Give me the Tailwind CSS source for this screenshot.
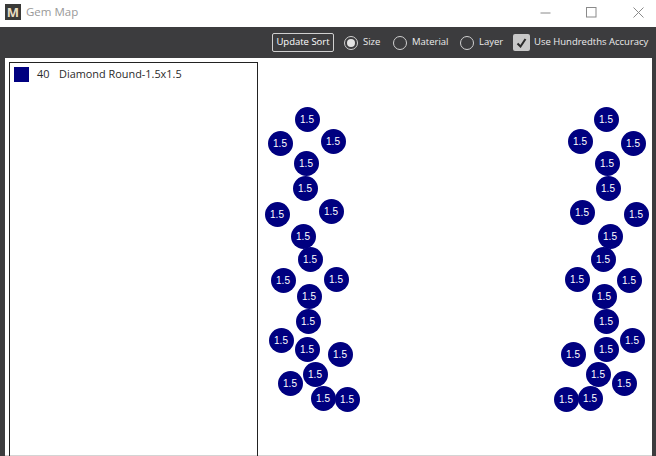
<!DOCTYPE html>
<html lang="en">
<head>
<meta charset="UTF-8">
<title>Gem Map</title>
<script src="https://cdn.jsdelivr.net/npm/@tailwindcss/browser@4"></script>
</head>
<body class="w-[656px] h-[456px] overflow-hidden bg-[#3c3c3e] font-['Open_Sans',sans-serif]">
  <!-- title bar -->
  <div class="h-[27px] bg-white flex items-center pl-[5px]">
    <div class="w-[16px] h-[16px] mb-[3px] bg-[#3a3a38] text-[#e6dcc0] text-[13px] leading-[16px] font-bold text-center">M</div>
    <span class="ml-[5px] mb-[3px] text-[11.5px] text-[#999]">Gem Map</span>
    <div class="ml-auto flex items-center mb-[3px]">
      <svg class="mr-[35px]" width="11" height="11" viewBox="0 0 11 11"><path d="M0.5 6h10" stroke="#8a8a8a" fill="none"/></svg>
      <svg class="mr-[36px]" width="11" height="11" viewBox="0 0 11 11"><rect x="0.5" y="0.5" width="9.5" height="9.5" stroke="#8a8a8a" fill="none"/></svg>
      <svg class="mr-[12px]" width="11" height="11" viewBox="0 0 11 11"><path d="M0.5 0.5l10 10M10.5 0.5l-10 10" stroke="#8a8a8a" fill="none"/></svg>
    </div>
  </div>
  <!-- toolbar -->
  <div class="h-[31px] flex items-center justify-end pr-[7px] text-[9.5px] text-[#ececec]">
    <button class="h-[19px] w-[62px] border border-[#d0d0d0] rounded-[2px] text-white text-[9.5px] mr-[10px]">Update Sort</button>
    <span class="w-[14px] h-[14px] rounded-full border border-[#d0d0d0] flex items-center justify-center mr-[5px]"><span class="w-[8px] h-[8px] rounded-full bg-[#e4e4e4]"></span></span>
    <span class="w-[18px] mr-[12px]">Size</span>
    <span class="w-[14px] h-[14px] rounded-full border border-[#d0d0d0] mr-[5px]"></span>
    <span class="w-[36px] mr-[12px]">Material</span>
    <span class="w-[14px] h-[14px] rounded-full border border-[#d0d0d0] mr-[5px]"></span>
    <span class="w-[25px] mr-[9px]">Layer</span>
    <span class="w-[17px] h-[17px] rounded-[2px] bg-[#c8c8c8] flex items-center justify-center mr-[4px]">
      <svg width="11" height="10" viewBox="0 0 11 10"><path d="M1.5 5.5l3 3 5-7.5" stroke="#2a2a2a" stroke-width="2" fill="none"/></svg>
    </span>
    <span class="w-[115px] whitespace-nowrap">Use Hundredths Accuracy</span>
  </div>
  <!-- content -->
  <div class="relative ml-[5px] mr-[4px] h-[398px] bg-white border-b border-[#d4d4d4] pt-[4px] pl-[4px]">
    <div class="w-[249px] h-[400px] border border-[#222] flex items-center self-start">
      <div class="self-start flex items-center h-[16px] mt-[3px] ml-[4px] text-[10.9px] text-[#2a2a2a]">
        <span class="w-[15px] h-[15px] mt-[1px] bg-[#000080]"></span>
        <span class="ml-[8px] w-[22px]">40</span>
        <span>Diamond Round-1.5x1.5</span>
      </div>
    </div>
    <div id="gems" class="absolute inset-0 overflow-hidden"></div>
  </div>
  <script>
    // page coordinates of the gem centres
    const gems = [
      [307,119],[280,143],[333,141],[306,163],[305,188],[277,214],[331,211],[303,236],[310,259],[283,280],
      [336,279],[309,296],[308,321],[281,340],[307,349],[340,354],[315,374],[290,383],[323,398],[347,399],
      [606,119],[580,141],[633,143],[607,163],[608,188],[582,212],[636,214],[610,236],[603,259],[577,279],
      [629,280],[604,296],[606,321],[632,340],[606,349],[573,354],[598,374],[624,383],[590,398],[566,399]
    ];
    document.getElementById("gems").innerHTML = gems.map(([x, y]) =>
      `<div class="absolute w-[25px] h-[25px] rounded-full bg-[#000080] text-white text-[10px] leading-[25px] text-center font-['Liberation_Sans',sans-serif]" style="left:${x - 5 - 12.5}px;top:${y - 58 - 12.5}px">1.5</div>`
    ).join("");
  </script>
</body>
</html>
